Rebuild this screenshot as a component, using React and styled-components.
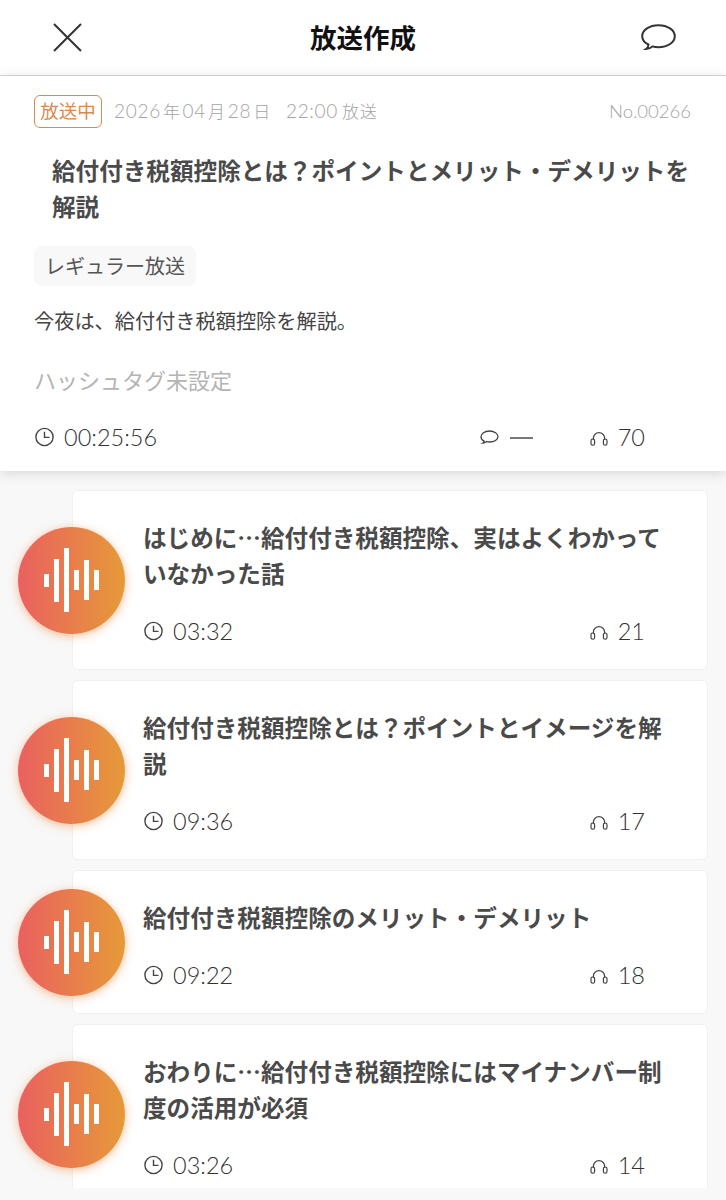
import React from "react";
import styled, { createGlobalStyle } from "styled-components";

const CJK = `"Noto Sans CJK JP", sans-serif`;
const LATIN = `Lato, "Noto Sans CJK JP", sans-serif`;

const Global = createGlobalStyle`
  html, body { margin: 0; padding: 0; background: #f8f8f8; }
  body { font-family: ${CJK}; color: #444; }
  * { box-sizing: border-box; }
`;

const Page = styled.div`
  width: 726px;
  height: 1200px;
  overflow: hidden;
  background: #f8f8f8;
`;

const Header = styled.header`
  height: 76px;
  background: #fff;
  border-bottom: 1px solid #d9d9d9;
  display: flex;
  align-items: center;
  justify-content: space-between;
  padding: 0 50px 1px 51px;
  position: relative;
`;

const HeaderTitle = styled.h1`
  position: absolute;
  left: 0;
  right: 0;
  top: 18px;
  margin: 0;
  text-align: center;
  font-size: 26.5px;
  line-height: 38px;
  font-weight: 700;
  color: #111;
`;

const IconBtn = styled.span`
  display: flex;
  line-height: 0;
`;

const Summary = styled.section`
  background: #fff;
  height: 395px;
  padding: 19px 35px 0 34px;
  box-shadow: 0 2px 12px rgba(0, 0, 0, 0.14);
  position: relative;
  z-index: 2;
`;

const InfoRow = styled.div`
  display: flex;
  align-items: center;
  height: 33px;
`;

const Badge = styled.span`
  width: 68px;
  height: 33px;
  border: 1.5px solid #d98a50;
  border-radius: 6px;
  color: #d98a50;
  font-size: 18.5px;
  line-height: 29px;
  text-align: center;
  margin-right: 12px;
`;

const DateText = styled.span`
  font-family: ${LATIN};
  font-size: 19px;
  font-weight: 300;
  letter-spacing: 0.7px;
  line-height: 30px;
  color: #a4a4a4;
  white-space: pre;
  margin-top: -1px;
`;

const Small = styled.span`
  font-size: 17px;
  margin: 0 ${(p) => p.$space || 0}px 0 ${(p) => p.$lead || 0}px;
`;

const Serial = styled.span`
  margin: -1px 0 0 auto;
  font-family: ${LATIN};
  font-weight: 300;
  font-size: 18.5px;
  color: #a4a4a4;
`;

const Title = styled.h2`
  margin: 0;
  font-size: 23.6px;
  line-height: 36px;
  font-weight: 700;
  color: #4a4a4a;
`;

const SummaryTitle = styled(Title)`
  margin: 24px 0 0 18px;
`;

const Tag = styled.span`
  display: inline-block;
  margin-top: 22px;
  height: 40px;
  line-height: 40px;
  padding: 0 11px;
  background: #f8f8f8;
  border-radius: 8px;
  font-size: 20px;
  color: #555;
`;

const Description = styled.p`
  margin: 20px 0 0;
  font-size: 20.2px;
  line-height: 30px;
  color: #444;
`;

const Hashtags = styled.p`
  margin: 26px 0 0;
  font-size: 22px;
  line-height: 34px;
  color: #b4b4b4;
`;

const Stats = styled.div`
  display: flex;
  align-items: center;
  height: 32px;
  margin-top: 25px;
  font-family: ${LATIN};
  font-weight: 300;
  font-size: 23.5px;
  color: #333;
`;

const Stat = styled.span`
  display: flex;
  align-items: center;
  gap: ${(p) => p.$gap || 10}px;
  margin-left: ${(p) => (p.$auto ? "auto" : p.$left ? p.$left + "px" : 0)};
  margin-right: ${(p) => p.$right || 0}px;
`;

const Dash = styled.span`
  display: block;
  width: 23px;
  height: 1.2px;
  margin-top: 2px;
  background: #777;
`;

const List = styled.div`
  height: 698px;
  margin-top: 19px;
  overflow: hidden;
  padding: 0 18px 0 72px;
  display: flex;
  flex-direction: column;
  gap: 10px;
`;

const Row = styled.article`
  position: relative;
  flex: none;
  background: #fff;
  border: 1px solid #f0f0f0;
  border-radius: 6px;
  padding: 28px 34px 0 70px;
`;

const Disc = styled.div`
  position: absolute;
  left: -55px;
  top: 50%;
  width: 107px;
  height: 107px;
  margin-top: -53.5px;
  border-radius: 50%;
  background: linear-gradient(90deg, #ea6060, #e69a38);
  box-shadow: 0 2px 10px rgba(240, 130, 50, 0.5);
  display: flex;
  align-items: center;
  justify-content: center;
`;

const Bars = styled.div`
  display: flex;
  align-items: center;
  gap: 4.8px;
`;

const Bar = styled.span`
  width: 5.3px;
  background: #fff;
`;

const RowMeta = styled.div`
  display: flex;
  align-items: center;
  height: 32px;
  margin-top: 24px;
  margin-bottom: 22px;
  font-family: ${LATIN};
  font-weight: 300;
  font-size: 23.5px;
  color: #333;
`;

const ClockIcon = () => (
  <svg width="20" height="20" viewBox="0 0 20 20" fill="none" stroke="#444" strokeWidth="1.4">
    <circle cx="10.5" cy="10" r="8.6" />
    <path d="M10.5 4.8V10.4H15.5" />
  </svg>
);

const PhonesIcon = () => (
  <svg width="18" height="15" viewBox="0 0 18 15" fill="none" stroke="#444" strokeWidth="1.2" style={{ marginTop: 2 }}>
    <path d="M3.4 9V7.2a5.6 5.6 0 0 1 11.2 0V9" />
    <rect x="1" y="8" width="3.6" height="6.2" rx="1.8" />
    <rect x="13.4" y="8" width="3.6" height="6.2" rx="1.8" />
  </svg>
);

const SmallBubble = () => (
  <svg width="19" height="15" viewBox="0 0 19 15" fill="none" stroke="#444" strokeWidth="1.3">
    <path d="M4.2 11.2C2 10.3 1 8.8 1 6.8 1 3.6 4.6 1 9.5 1S18 3.6 18 6.6s-3.6 5.4-8.5 5.4c-1.2 0-2.2-.1-3.1-.4-.8.9-2 1.6-3.6 1.6.9-.5 1.3-1.2 1.4-2Z" />
  </svg>
);

const barHeights = [13, 43, 64, 20, 40, 20];

const EpisodeRow = ({ title, time, plays }) => (
  <Row>
    <Disc>
      <Bars>
        {barHeights.map((h, i) => (
          <Bar key={i} style={{ height: h }} />
        ))}
      </Bars>
    </Disc>
    <Title>{title}</Title>
    <RowMeta>
      <Stat>
        <ClockIcon />
        {time}
      </Stat>
      <Stat $auto $right={28}>
        <PhonesIcon />
        {plays}
      </Stat>
    </RowMeta>
  </Row>
);

const episodes = [
  { title: "はじめに…給付付き税額控除、実はよくわかっていなかった話", time: "03:32", plays: 21 },
  { title: "給付付き税額控除とは？ポイントとイメージを解説", time: "09:36", plays: 17 },
  { title: "給付付き税額控除のメリット・デメリット", time: "09:22", plays: 18 },
  { title: "おわりに…給付付き税額控除にはマイナンバー制度の活用が必須", time: "03:26", plays: 14 },
];

export default function App() {
  return (
    <Page>
      <Global />
      <Header>
        <IconBtn>
          <svg width="32" height="32" viewBox="0 0 32 32" fill="none" stroke="#333" strokeWidth="2">
            <path d="M3 3 30 30M30 3 3 30" />
          </svg>
        </IconBtn>
        <HeaderTitle>放送作成</HeaderTitle>
        <IconBtn>
          <svg width="35" height="28" viewBox="0 0 35 28" fill="none" stroke="#333" strokeWidth="2">
            <path d="M7.5 21.5C3.5 19.6 1.2 16.7 1.2 13.2 1.2 7 8.4 2.2 17.5 2.2S33.8 7 33.8 13.2 26.6 24.2 17.5 24.2c-2.3 0-4.2-.2-6-.8-1.4 1.4-3.5 2.6-6.5 2.6 1.5-1 2.4-2.6 2.5-4.5Z" />
          </svg>
        </IconBtn>
      </Header>
      <Summary>
        <InfoRow>
          <Badge>放送中</Badge>
          <DateText>
            2026<Small $lead={2} $space={2}>年</Small>04<Small $lead={2} $space={2}>月</Small>28<Small $lead={2} $space={15}>日</Small>22:00<Small $lead={4}>放送</Small>
          </DateText>
          <Serial>No.00266</Serial>
        </InfoRow>
        <SummaryTitle>給付付き税額控除とは？ポイントとメリット・デメリットを解説</SummaryTitle>
        <Tag>レギュラー放送</Tag>
        <Description>今夜は、給付付き税額控除を解説。</Description>
        <Hashtags>ハッシュタグ未設定</Hashtags>
        <Stats>
          <Stat>
            <ClockIcon />
            00:25:56
          </Stat>
          <Stat $auto $gap={11}>
            <SmallBubble />
            <Dash />
          </Stat>
          <Stat $left={57} $right={46}>
            <PhonesIcon />
            70
          </Stat>
        </Stats>
      </Summary>
      <List>
        {episodes.map((e) => (
          <EpisodeRow key={e.title} {...e} />
        ))}
      </List>
    </Page>
  );
}
